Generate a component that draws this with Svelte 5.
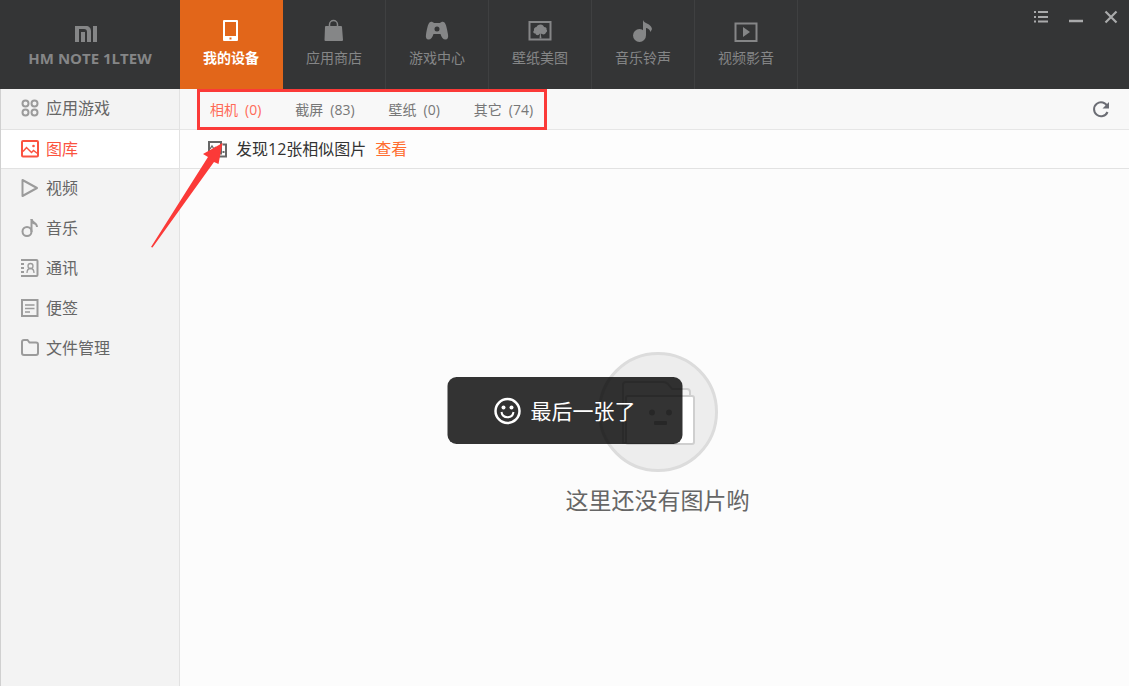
<script>
  const tabs = [
    { id: 'device', label: '我的设备' },
    { id: 'store', label: '应用商店' },
    { id: 'games', label: '游戏中心' },
    { id: 'wallpaper', label: '壁纸美图' },
    { id: 'ring', label: '音乐铃声' },
    { id: 'video', label: '视频影音' }
  ];
  const sections = [
    { id: 'apps', label: '应用游戏' },
    { id: 'gallery', label: '图库' },
    { id: 'videos', label: '视频' },
    { id: 'music', label: '音乐' },
    { id: 'contacts', label: '通讯' },
    { id: 'notes', label: '便签' },
    { id: 'files', label: '文件管理' }
  ];
  const albums = [
    { name: '相机', count: 0 },
    { name: '截屏', count: 83 },
    { name: '壁纸', count: 0 },
    { name: '其它', count: 74 }
  ];
  let tab = $state('device');
  let section = $state('gallery');
  let album = $state('相机');
</script>

<div class="window">
  <header>
    <div class="brand">
      <svg width="22" height="16" viewBox="0 0 22 16" fill="#858687" aria-hidden="true">
        <path d="M0 0h11c3 0 5 2 5 5v11h-4V6c0-2-1-3-3-3H4v13H0zM6 6h4v10H6zM18 0h4v16h-4z" />
      </svg>
      <span>HM NOTE 1LTEW</span>
    </div>
    <nav class="tabs">
      {#each tabs as t}
        <button class:active={tab === t.id} onclick={() => (tab = t.id)}>
          <svg width="24" height="24" viewBox="0 0 24 24" fill="currentColor" aria-hidden="true">
            {#if t.id === 'device'}
              <path fill-rule="evenodd" d="M5 1h13a1 1 0 0 1 1 1v19a1 1 0 0 1-1 1H5a1 1 0 0 1-1-1V2a1 1 0 0 1 1-1zm1 2v14h11V3zm4.500 15.500v2h2v-2z" />
            {:else if t.id === 'store'}
              <path d="M7.500 8V5.500a4 4 0 0 1 8 0V8" fill="none" stroke="currentColor" stroke-width="1.500" />
              <path d="M4 7h15a1 1 0 0 1 1 1l1 13a1 1 0 0 1-1 1H3.500a1 1 0 0 1-1-1L3 8a1 1 0 0 1 1-1z" />
            {:else if t.id === 'games'}
              <path fill-rule="evenodd" d="M4.500 3.500C6 2 8 3 9 4h6c1-1 3-2 4.500-.5 1.500 1.500 2.500 6 3.500 12 .6 3-.5 5-2.500 5-2.500 0-4-2-5-5.500h-7c-1 3.500-2.500 5.500-5 5.500-2 0-3.100-2-2.500-5 1-6 2-10.500 3.500-12zM12 7.500a2.500 2.500 0 1 0 0 5 2.500 2.500 0 0 0 0-5z" />
            {:else if t.id === 'wallpaper'}
              <path d="M1.500 3h21v17.500h-21z" fill="none" stroke="currentColor" stroke-width="2" />
              <path d="M12.500 5.500c2 0 3 1 3.500 2.500 2 0 3 1 2.500 2.500 1 1 .5 2.500-.5 3-.5 2-3 2.500-4 1.500l-1.300-.5.800 5h-2l.5-5-1.500 1.500c-2 .5-3-.5-3-1.500-2 0-3-1.500-1.500-3C5.500 9.500 7 8 8.500 8c.5-1.500 2-2.500 4-2.500z" />
            {:else if t.id === 'ring'}
              <circle cx="8.500" cy="16.500" r="6.500" />
              <path d="M12 1c1 4 8 3 9 9l-1.500 3c-1-3-3-4-4.500-4v7h-3z" />
            {:else}
              <path d="M1.500 4.500h21v17.500h-21z" fill="none" stroke="currentColor" stroke-width="2" />
              <path d="M9 8l7 5-7 5z" />
            {/if}
          </svg>
          <span>{t.label}</span>
        </button>
      {/each}
    </nav>
    <div class="controls">
      <button aria-label="菜单">
        <svg width="16" height="16" viewBox="0 0 16 16" stroke="currentColor" stroke-width="2">
          <path d="M1 3h2M5 3h10M1 8h2M5 8h10M1 12.500h2M5 12.500h10" />
        </svg>
      </button>
      <button aria-label="最小化">
        <svg width="16" height="16" viewBox="0 0 16 16"><path d="M1 12h14" stroke="currentColor" stroke-width="2.500" /></svg>
      </button>
      <button aria-label="关闭">
        <svg width="16" height="16" viewBox="0 0 16 16"><path d="M2.500 2.500l11 11M13.500 2.500l-11 11" stroke="currentColor" stroke-width="2.200" /></svg>
      </button>
    </div>
  </header>

  <div class="body">
    <aside>
      {#each sections as s}
        <button class:active={section === s.id} onclick={() => (section = s.id)}>
          <svg width="20" height="20" viewBox="0 0 20 20" fill="none" stroke="currentColor" stroke-width="2" aria-hidden="true">
            {#if s.id === 'apps'}
              <circle cx="5.500" cy="5.500" r="3" /><circle cx="14.500" cy="5.500" r="3" />
              <circle cx="5.500" cy="14.500" r="3" /><circle cx="14.500" cy="14.500" r="3" />
            {:else if s.id === 'gallery'}
              <rect x="2" y="2" width="16" height="15.500" rx="1" />
              <path d="M3 12.500l3.500-4 5 5 2-2 4 3" stroke-width="1.500" />
              <circle cx="13.500" cy="7" r="1.300" fill="currentColor" stroke="none" />
            {:else if s.id === 'videos'}
              <path d="M2.500 2v16L17 10z" stroke-linejoin="round" />
            {:else if s.id === 'music'}
              <circle cx="7" cy="13.500" r="4.500" />
              <path d="M11.500 14V1" />
              <path d="M10.500 1h2c.5 3 5 3 5.500 8h-2c0-2-1.500-3-3.500-3z" fill="currentColor" stroke="none" />
            {:else if s.id === 'contacts'}
              <path d="M4 2h12.500a1 1 0 0 1 1 1v14a1 1 0 0 1-1 1H4" />
              <path d="M2.500 1v18" stroke-dasharray="2 2" stroke-width="3" />
              <circle cx="10.500" cy="8" r="2.500" stroke-width="1.300" />
              <path d="M7 15c0-3 1.500-4.500 3.500-4.500S14 12 14 15" stroke-width="1.300" />
            {:else if s.id === 'notes'}
              <rect x="2" y="2" width="15.500" height="16" />
              <path d="M5 7h9.500M5 10.500h9.500M5 14h5" stroke-width="1.500" />
            {:else}
              <path d="M2 4a2 2 0 0 1 2-2h3.500l2 2.500H16a2 2 0 0 1 2 2V15a2 2 0 0 1-2 2H4a2 2 0 0 1-2-2z" />
            {/if}
          </svg>
          <span>{s.label}</span>
        </button>
      {/each}
    </aside>

    <main>
      <div class="toolbar">
        <nav class="albums">
          {#each albums as a}
            <button class:active={album === a.name} onclick={() => (album = a.name)}>
              <span>{a.name}</span><span>({a.count})</span>
            </button>
          {/each}
        </nav>
        <button class="refresh" aria-label="刷新">
          <svg width="18" height="18" viewBox="0 0 18 18" fill="none">
            <path d="M15.500 6.500A7 7 0 1 0 15.500 12" stroke="currentColor" stroke-width="2" />
            <path d="M17 2v6.500h-6.500z" fill="currentColor" />
          </svg>
        </button>
      </div>

      <div class="notice">
        <svg width="20" height="18" viewBox="0 0 20 18" fill="none" stroke="#666" stroke-width="2" aria-hidden="true">
          <path d="M2 2h12v11.500H2z" /><path d="M3 9l2-3 2 3 2-2" stroke-width="1.300" />
          <path d="M15.500 4.500H19v12H9M16.500 11v2" />
        </svg>
        <span>发现12张相似图片</span>
        <a href="#similar">查看</a>
      </div>

      <section class="empty">
        <svg width="120" height="120" viewBox="0 0 120 120" aria-hidden="true">
          <circle cx="60" cy="60" r="58.500" fill="#ededed" stroke="#dcdcdc" stroke-width="3" />
          <g fill="#f4f4f4" stroke="#cfcfcf" stroke-width="2" stroke-linejoin="round">
            <path d="M25 91V33q0-3 3-3h37q3 0 5 2l4 5h15q3 0 3 3v51z" />
            <rect x="28" y="44" width="68" height="48" rx="2" fill="#fff" />
          </g>
          <g fill="#c4c4c4">
            <circle cx="54" cy="60.500" r="3" /><circle cx="71" cy="60.500" r="3" />
            <rect x="56" y="69" width="13" height="4" rx="1" />
          </g>
        </svg>
        <p>这里还没有图片哟</p>
      </section>
    </main>
  </div>

  <div class="toast" role="status">
    <svg width="28" height="28" viewBox="0 0 28 28" fill="none" stroke="#fff" aria-hidden="true">
      <circle cx="14" cy="14" r="12" stroke-width="2.500" />
      <circle cx="10" cy="10.500" r="2" fill="#fff" stroke="none" />
      <circle cx="18" cy="10.500" r="2" fill="#fff" stroke="none" />
      <path d="M8 15c1 7 11 7 12 0" stroke-width="2" />
    </svg>
    <span>最后一张了</span>
  </div>

  <svg class="arrow" width="80" height="112" viewBox="0 0 80 112" aria-hidden="true">
    <path d="M1 111 58 21 53 18 72.500 7 68.500 28 64 26 2.500 111.500z" fill="#fb3a38" />
  </svg>
</div>

<style>
  :global(body) { margin: 0; }
  .window {
    position: relative;
    display: flex;
    flex-direction: column;
    min-height: 100vh;
    background: #fcfcfc;
    color: #666;
    font-family: "Open Sans", "Noto Sans CJK SC", sans-serif;
    font-size: 14px;
  }
  button {
    margin: 0;
    padding: 0;
    border: 0;
    background: none;
    color: inherit;
    font: inherit;
    cursor: pointer;
  }
  svg { display: block; flex: none; }
  header { display: flex; height: 89px; background: #343536; color: #858687; }
  .brand {
    display: flex;
    flex-direction: column;
    align-items: center;
    gap: 6px;
    width: 180px;
    padding: 26px 8px 0 0;
    box-sizing: border-box;
    font-size: 15px;
    font-weight: 700;
    line-height: 20px;
  }
  .brand span { margin-left: 8px; }
  .tabs { display: flex; }
  .tabs button {
    display: flex;
    flex-direction: column;
    align-items: center;
    gap: 5px;
    width: 103px;
    padding-top: 19px;
    box-sizing: border-box;
    border-right: 1px solid #3f4041;
    line-height: 20px;
  }
  .tabs .active { background: #e2661a; border-color: #e2661a; color: #fff; font-weight: 700; }
  .controls { display: flex; gap: 19px; margin-left: auto; padding: 9px 10px 0 0; align-items: flex-start; color: #a9aaab; }
  .body { display: flex; flex: 1; }
  aside {
    display: flex;
    flex-direction: column;
    width: 180px;
    box-sizing: border-box;
    background: #f3f3f3;
    border-right: 1px solid #e2e2e2;
    border-left: 1px solid #d0d0d0;
    font-size: 16px;
  }
  aside button {
    display: flex;
    align-items: center;
    gap: 6px;
    height: 40px;
    padding: 0 0 2px 19px;
    box-sizing: border-box;
    line-height: 24px;
  }
  aside svg { color: #9b9b9b; }
  aside button:first-child { height: 41px; border-bottom: 1px solid #e2e2e2; }
  aside .active { height: 39px; background: #fff; color: #fb5340; box-shadow: inset 0 -1px #e2e2e2; }
  aside .active svg { color: #fb5340; }
  main { display: flex; flex: 1; flex-direction: column; min-width: 0; }
  .toolbar {
    display: flex;
    align-items: center;
    justify-content: space-between;
    height: 40px;
    padding: 0 19px 0 17px;
    background: #f8f8f8;
    border-bottom: 1px solid #e6e6e6;
  }
  .albums {
    display: flex;
    gap: 34px;
    height: 41px;
    margin-bottom: -1px;
    padding: 0 11px 0 10px;
    box-sizing: border-box;
    border: 3px solid #fb3a38;
    line-height: 20px;
    color: #777;
  }
  .albums button { display: flex; align-items: center; gap: 7px; }
  .albums .active { color: #ff6a57; }
  .refresh { color: #6b6d74; }
  .notice {
    display: flex;
    align-items: center;
    gap: 9px;
    height: 38px;
    padding-left: 27px;
    border-bottom: 1px solid #e2e2e2;
    background: #fdfdfd;
    color: #333;
    font-size: 16px;
    line-height: 24px;
  }
  .notice a { color: #ff6e31; text-decoration: none; }
  .empty {
    display: flex;
    flex: 1;
    flex-direction: column;
    align-items: center;
    justify-content: center;
    gap: 12px;
    padding: 12px 0 0 6px;
  }
  .empty p { margin: 0; font-size: 23px; line-height: 32px; }
  .toast {
    position: absolute;
    top: 377px;
    left: 50%;
    transform: translateX(-50%);
    display: flex;
    align-items: center;
    justify-content: center;
    gap: 9px;
    width: 235px;
    height: 67px;
    border-radius: 9px;
    background: rgba(0, 0, 0, 0.8);
    color: #fff;
    font-size: 21px;
    line-height: 30px;
  }
  .arrow { position: absolute; top: 136px; left: 150px; pointer-events: none; }
</style>
